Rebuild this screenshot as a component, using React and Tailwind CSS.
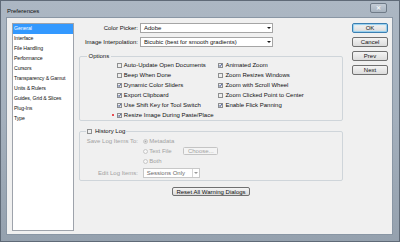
const Check = ({ checked, disabled }) => (
  <svg width="5" height="5" viewBox="0 0 5 5" className="block shrink-0">
    <rect x="0.5" y="0.5" width="4" height="4" fill={disabled ? "#f4f4f4" : "#eeeeee"} stroke={disabled ? "#bdbdbd" : "#8e8f8f"} strokeWidth="1" />
    {checked && (
      <path d="M1.1 2.4 L2.1 3.5 L3.9 1.1" fill="none" stroke="#2c4283" strokeWidth="0.9" />
    )}
  </svg>
);

const Radio = ({ checked }) => (
  <svg width="5" height="5" viewBox="0 0 5 5" className="block shrink-0">
    <circle cx="2.5" cy="2.5" r="2" fill="#f6f6f6" stroke="#bcbcbc" strokeWidth="0.8" />
    {checked && <circle cx="2.5" cy="2.5" r="1" fill="#a8a8a8" />}
  </svg>
);

const Arrow = ({ color = "#1a1a1a" }) => (
  <svg width="4" height="2" viewBox="0 0 4 2" className="block shrink-0">
    <polygon points="0,0 4,0 2,2" fill={color} />
  </svg>
);

const Btn = ({ children, primary }) => (
  <button
    className={
      primary
        ? "h-[10px] w-full border border-[#3c7fb1] rounded-[2px] bg-gradient-to-b from-[#f4f4f4] to-[#dcdcdc] shadow-[inset_0_0_1px_1px_#92cff0] text-[6px] leading-none text-[#111] flex items-center justify-center"
        : "h-[10px] w-full border border-[#707070] rounded-[2px] bg-gradient-to-b from-[#f4f4f4] to-[#dcdcdc] text-[6px] leading-none text-[#111] flex items-center justify-center"
    }
  >
    {children}
  </button>
);

export default function App() {
  const list = [
    "General",
    "Interface",
    "File Handling",
    "Performance",
    "Cursors",
    "Transparency & Gamut",
    "Units & Rulers",
    "Guides, Grid & Slices",
    "Plug-Ins",
    "Type",
  ];
  const col1 = [
    ["Auto-Update Open Documents", false],
    ["Beep When Done", false],
    ["Dynamic Color Sliders", true],
    ["Export Clipboard", true],
    ["Use Shift Key for Tool Switch", true],
    ["Resize Image During Paste/Place", true, true],
  ];
  const col2 = [
    ["Animated Zoom", true],
    ["Zoom Resizes Windows", false],
    ["Zoom with Scroll Wheel", true],
    ["Zoom Clicked Point to Center", false],
    ["Enable Flick Panning", true],
  ];

  return (
    <div className="w-[400px] h-[242px] flex flex-col border border-[#5f6a77] bg-gradient-to-b from-[#acb7c3] via-[#a3afbc] to-[#95a1ae] font-['Liberation_Sans',Arial,sans-serif] text-[6px] text-[#111] overflow-hidden">
      {/* Title bar */}
      <div className="h-[16px] shrink-0 flex items-start justify-between pl-[6px] pr-[12px]">
        <span className="mt-[7px] leading-none text-[6px] text-[#111]">Preferences</span>
        <div className="mt-[2px] w-[17px] h-[10px] rounded-[2px] border border-[#6f7b88] bg-gradient-to-b from-[#c3ccd6] to-[#a7b3bf] flex items-center justify-center">
          <span className="text-[6px] leading-none font-bold text-[#f4f6f8]">✕</span>
        </div>
      </div>

      {/* Client area */}
      <div className="flex-1 ml-[5px] mr-[6px] mb-[6px] bg-[#f0f0f0] border border-[#8996a4] flex gap-[5px] pt-[5px] pb-[3px] pl-[5px] pr-[4px]">
        {/* Category list */}
        <div className="w-[62px] shrink-0 bg-white border border-[#9ea3ab] flex flex-col">
          {list.map((item, i) => (
            <div
              key={item}
              className={
                i === 0
                  ? "h-[10px] flex items-center pl-[1px] bg-[#3399ff] text-white whitespace-nowrap text-[5.2px] tracking-[-0.1px] leading-none"
                  : "h-[10px] flex items-center pl-[1px] whitespace-nowrap text-[5.2px] tracking-[-0.1px] leading-none"
              }
            >
              {item}
            </div>
          ))}
        </div>

        {/* Middle column */}
        <div className="w-[264px] shrink-0 flex flex-col self-start">
          <div className="h-[10px] flex items-center">
            <span className="w-[59px] text-right leading-none">Color Picker:</span>
            <div className="ml-[2px] w-[133px] h-[10px] bg-white border border-[#a5a5a5] flex items-center justify-between pl-[3px] pr-[1.5px]">
              <span className="leading-none">Adobe</span>
              <Arrow />
            </div>
          </div>
          <div className="mt-[4px] h-[10px] flex items-center">
            <span className="w-[59px] text-right leading-none whitespace-nowrap">Image Interpolation:</span>
            <div className="ml-[2px] w-[133px] h-[10px] bg-white border border-[#a5a5a5] flex items-center justify-between pl-[3px] pr-[1.5px]">
              <span className="leading-none whitespace-nowrap">Bicubic (best for smooth gradients)</span>
              <Arrow />
            </div>
          </div>

          {/* Options group */}
          <fieldset className="mt-[5px] border border-[#cfd5da] rounded-[2px]">
            <legend className="ml-[7px] px-[1.5px] leading-[8px] text-[6px]">Options</legend>
            <div className="flex pl-[36.5px]">
              <div className="w-[101.6px] shrink-0 flex flex-col">
                {col1.map(([label, checked, dot]) => (
                  <div key={label} className="relative h-[10px] flex items-center gap-[2.3px] whitespace-nowrap">
                    {dot && <span className="absolute left-[-5px] top-[4px] w-[2px] h-[2px] rounded-full bg-[#e5171f]" />}
                    <Check checked={checked} />
                    <span className="leading-none">{label}</span>
                  </div>
                ))}
              </div>
              <div className="flex flex-col">
                {col2.map(([label, checked]) => (
                  <div key={label} className="h-[10px] flex items-center gap-[2.3px] whitespace-nowrap">
                    <Check checked={checked} />
                    <span className="leading-none">{label}</span>
                  </div>
                ))}
              </div>
            </div>
          </fieldset>

          {/* History Log group */}
          <fieldset className="mt-[6px] border border-[#cfd5da] rounded-[2px] pt-[1px] pb-[2px]">
            <legend className="ml-[6px] px-[1px] h-[8px]">
              <span className="inline-flex items-center gap-[3px] h-[8px] align-top">
                <Check checked={false} />
                <span className="leading-none">History Log</span>
              </span>
            </legend>
            <div className="grid grid-cols-[58px_1fr] gap-x-[4.7px] text-[#a2a2a2]">
              <span className="h-[10px] flex items-center justify-end leading-none whitespace-nowrap">Save Log Items To:</span>
              <div className="h-[10px] flex items-center gap-[1.6px]">
                <Radio checked />
                <span className="leading-none">Metadata</span>
              </div>
              <span />
              <div className="h-[10px] flex items-center gap-[1.6px]">
                <Radio />
                <span className="w-[32.4px] leading-none">Text File</span>
                <div className="w-[35px] h-[8.5px] border border-[#c4c4c4] rounded-[1.5px] bg-[#f4f4f4] flex items-center justify-center leading-none">
                  Choose...
                </div>
              </div>
              <span />
              <div className="h-[10px] flex items-center gap-[1.6px]">
                <Radio />
                <span className="leading-none">Both</span>
              </div>
              <span className="mt-[2px] h-[10px] flex items-center justify-end leading-none whitespace-nowrap">Edit Log Items:</span>
              <div className="mt-[2px] w-[57.5px] h-[10px] bg-white border border-[#c8c8c8] flex items-stretch">
                <span className="flex-1 flex items-center pl-[3px] leading-none text-[#6a6a6a] whitespace-nowrap">Sessions Only</span>
                <span className="w-[7.5px] border-l border-[#d6d6d6] flex items-center justify-center">
                  <Arrow color="#9a9a9a" />
                </span>
              </div>
            </div>
          </fieldset>

          <button className="mt-[6px] self-center w-[78px] h-[9px] border border-[#707070] rounded-[2px] bg-gradient-to-b from-[#f4f4f4] to-[#dcdcdc] text-[6px] leading-none text-[#111] flex items-center justify-center whitespace-nowrap">
            Reset All Warning Dialogs
          </button>
        </div>

        {/* Buttons column */}
        <div className="ml-[4px] w-[36px] shrink-0 flex flex-col gap-[4px] self-start">
          <Btn primary>OK</Btn>
          <Btn>Cancel</Btn>
          <Btn>Prev</Btn>
          <Btn>Next</Btn>
        </div>
      </div>
    </div>
  );
}
